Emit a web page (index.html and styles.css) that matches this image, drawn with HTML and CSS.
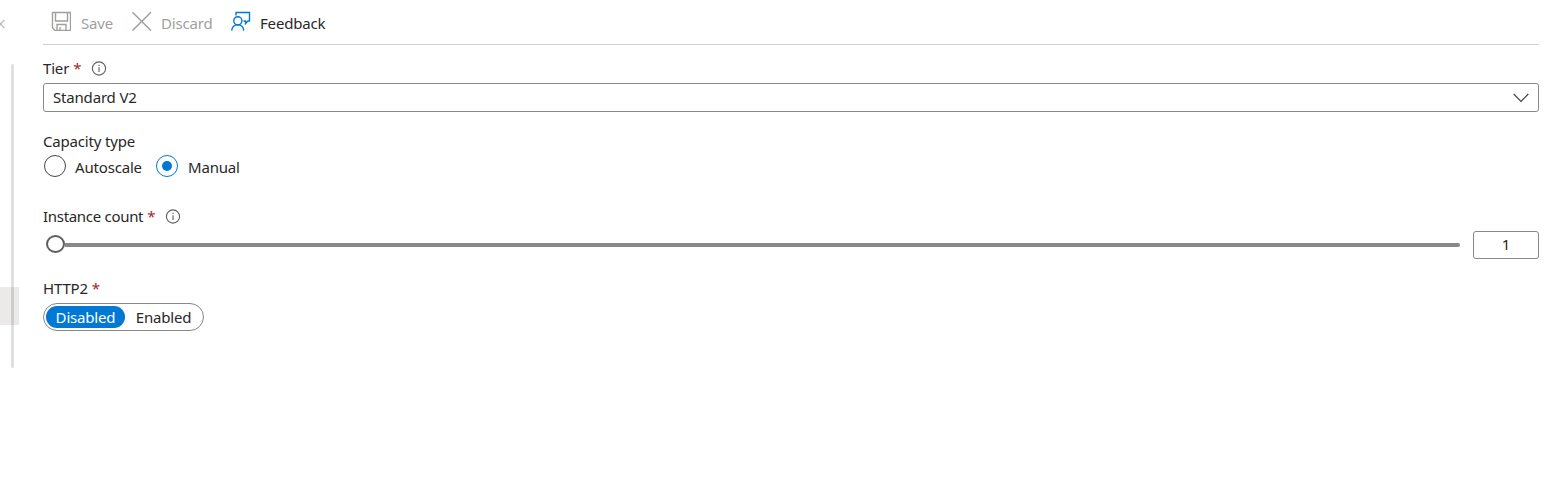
FILE: index.html
```html
<!DOCTYPE html>
<html lang="en">
<head>
<meta charset="utf-8">
<title>Configuration</title>
<link rel="stylesheet" href="styles.css">
</head>
<body>
<div class="page">
  <aside class="side">
    <svg class="collapse" width="6" height="10" viewBox="0 0 6 10"><path d="M4.500 1 .5 5l4 4M-1.500 2.500 1 5l-2.500 2.500" /></svg>
    <div class="current"></div>
    <div class="scrollbar"></div>
  </aside>
  <main class="main">
    <header class="toolbar">
      <button class="command save" disabled>
        <svg width="20" height="20" viewBox="0 0 20 20"><path d="M1.500 1.500h18v18H4L1.500 17zM4.500 1.500v8.500h12V1.500M6 19.500v-6h9v6M9 19.500V16" /></svg>
        <span>Save</span>
      </button>
      <button class="command discard" disabled>
        <svg width="20" height="20" viewBox="0 0 20 20"><path d="m.5 1.200 18.400 18.400M18.900 1.200.5 19.600" /></svg>
        <span>Discard</span>
      </button>
      <button class="command feedback">
        <svg width="20" height="20" viewBox="0 0 20 20"><path d="M5 4.500v-3h13.500V10H17l-2.500 2.500V10h-2" /><circle cx="6.800" cy="9.800" r="4.100" /><path d="M.7 19.600c.4-3.500 2.800-5.700 6.100-5.700s5.600 2.200 6 5.700" /></svg>
        <span>Feedback</span>
      </button>
    </header>

    <div class="label tier"><span>Tier</span><span class="star">*</span>
      <svg class="info" width="16" height="16" viewBox="0 0 16 16"><circle cx="8" cy="8.500" r="6.600" /><path d="M8 7.300V12M8 4.800V6" /></svg>
    </div>
    <div class="select"><span>Standard V2</span>
      <svg width="16" height="10" viewBox="0 0 16 10"><path d="m.7 1 7.300 7.500L15.300 1" /></svg>
    </div>

    <div class="label capacity"><span>Capacity type</span></div>
    <div class="radios">
      <div class="radio"><i class="ring"></i><span>Autoscale</span></div>
      <div class="radio on"><i class="ring"></i><span>Manual</span></div>
    </div>

    <div class="label instance"><span class="tight">Instance count</span><span class="star">*</span>
      <svg class="info" width="16" height="16" viewBox="0 0 16 16"><circle cx="8" cy="8.500" r="6.600" /><path d="M8 7.300V12M8 4.800V6" /></svg>
    </div>
    <div class="slider-row">
      <div class="slider"><i class="thumb"></i><i class="track"></i></div>
      <div class="count">1</div>
    </div>

    <div class="label http"><span>HTTP2</span><span class="star">*</span></div>
    <div class="toggle">
      <span class="option selected">Disabled</span>
      <span class="option">Enabled</span>
    </div>
  </main>
</div>
</body>
</html>
```
FILE: styles.css
```css
* { box-sizing: border-box; }
body { margin: 0; background: #fff; color: #292827; font: 15px/20px "Noto Sans", "Open Sans", sans-serif; letter-spacing: -.18px; white-space: nowrap; overflow: hidden; }
svg { display: block; flex: none; fill: none; stroke: currentColor; stroke-width: 1.4; }
.page { display: flex; width: 1561px; height: 484px; }
.side { position: relative; width: 43px; flex: none; padding-top: 19px; }
.collapse { color: #bdbbb9; stroke-width: 1.200; }
.current { width: 19px; height: 38px; margin-top: 258px; background: #ebeae9; }
.scrollbar { position: absolute; left: 11px; top: 64px; width: 3px; height: 304px; border-radius: 2px; background: rgba(0, 0, 0, .12); }
.main { width: 1496px; display: flex; flex-direction: column; }
.toolbar { height: 45px; padding: 2px 0 0 8px; display: flex; align-items: center; border-bottom: 1px solid #d2d0ce; }
.command { display: flex; align-items: center; gap: 9px; padding: 0; border: 0; background: none; font: inherit; letter-spacing: inherit; color: inherit; }
.command:disabled { color: #a19f9d; }
.command svg { margin-top: -4px; }
.save { width: 81px; gap: 10px; }
.discard { width: 99px; }
.feedback svg { color: #0078d4; }
.label { display: flex; align-items: center; height: 20px; }
.tight { letter-spacing: -.3px; }
.star { width: 9px; margin-left: 4px; color: #a4262c; font-size: 15px; }
.info { margin-left: 9px; color: #605e5c; stroke-width: 1.100; }
.tier { margin-top: 13px; }
.select { display: flex; align-items: center; justify-content: space-between; height: 29px; margin-top: 5px; padding: 0 9px; border: 1px solid #8a8886; border-radius: 3px; }
.select span { padding-bottom: 2px; }
.select svg { color: #484644; stroke-width: 1.200; }
.capacity { margin-top: 19px; }
.radios { display: flex; height: 24px; margin-top: 3px; }
.radio { display: flex; align-items: center; width: 112px; padding-left: 1px; gap: 9px; }
.on { gap: 10px; }
.radio span { padding-top: 2px; }
.ring { display: flex; align-items: center; justify-content: center; flex: none; width: 22px; height: 22px; border: 1px solid #484644; border-radius: 50%; }
.on .ring { border-color: #0078d4; }
.on .ring::after { content: ""; width: 10px; height: 10px; border-radius: 50%; background: #0078d4; }
.instance { margin-top: 28px; }
.slider-row { display: flex; align-items: center; height: 28px; margin-top: 5px; gap: 13px; }
.slider { display: flex; align-items: center; width: 1417px; padding-left: 3px; }
.thumb { width: 19px; height: 18px; margin-top: -2px; border: 2px solid #605e5c; border-radius: 50%; }
.track { flex: 1; height: 4px; border-radius: 0 2px 2px 0; background: #8a8886; }
.count { width: 66px; height: 28px; border: 1px solid #8a8886; border-radius: 3px; text-align: center; line-height: 25px; }
.http { margin-top: 19px; }
.toggle { display: flex; width: 161px; height: 28px; margin-top: 5px; padding: 2px; border: 1px solid #8a8886; border-radius: 14px; }
.option { display: flex; align-items: center; justify-content: center; flex: 1; height: 22px; padding-left: 1px; }
.option.selected { flex: none; width: 79px; padding: 0; border-radius: 11px; background: #0078d4; color: #fff; }
```
